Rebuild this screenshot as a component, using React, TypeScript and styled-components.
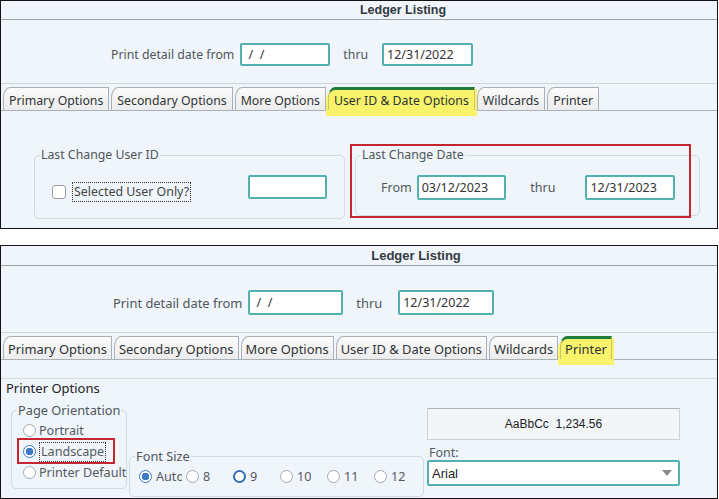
import * as React from 'react';
import styled, { createGlobalStyle } from 'styled-components';

const GlobalStyle = createGlobalStyle`
  html, body {
    margin: 0;
    padding: 0;
    background: #ffffff;
    font-family: "Noto Sans", "Open Sans", sans-serif;
  }
`;

type Metrics = {
  font: number;
  titleFont: number;
  titleShift: number;
  titleH: number;
  rowTop: number;
  rowLeft: number;
  fromW: number;
  thruW: number;
  inputH: number;
  thruL: number;
  thruR: number;
  tabPad: number;
};

const TOP: Metrics = {
  font: 12.3,
  titleFont: 12.5,
  titleShift: 88,
  titleH: 18,
  rowTop: 23,
  rowLeft: 110,
  fromW: 90,
  thruW: 91,
  inputH: 23,
  thruL: 13,
  thruR: 14,
  tabPad: 5,
};

const BOTTOM: Metrics = {
  font: 12.9,
  titleFont: 13,
  titleShift: 114,
  titleH: 19,
  rowTop: 24,
  rowLeft: 112,
  fromW: 95,
  thruW: 96,
  inputH: 25,
  thruL: 13,
  thruR: 16,
  tabPad: 4,
};

const Page = styled.div`
  width: 719px;
  height: 499px;
  display: flex;
  flex-direction: column;
  gap: 16px;
  overflow: hidden;
`;

const Panel = styled.div<{ $h: number }>`
  position: relative;
  width: 718px;
  height: ${p => p.$h}px;
  box-sizing: border-box;
  border: 1px solid #141414;
  background: #eff5fb;
  color: #444;
`;

const TitleBar = styled.div<{ $m: Metrics }>`
  height: ${p => p.$m.titleH}px;
  border-bottom: 1px solid #9aa3ab;
  padding-left: ${p => p.$m.titleShift}px;
  display: flex;
  align-items: center;
  justify-content: center;
  font-family: "Liberation Sans", Arial, sans-serif;
  font-weight: bold;
  font-size: ${p => p.$m.titleFont}px;
  color: #333a40;
`;

const DateRow = styled.div<{ $m: Metrics }>`
  display: flex;
  align-items: center;
  margin-top: ${p => p.$m.rowTop}px;
  padding-left: ${p => p.$m.rowLeft}px;
  font-size: ${p => p.$m.font}px;
  color: #505559;
`;

const TextBox = styled.div<{ $w: number; $h: number }>`
  width: ${p => p.$w}px;
  height: ${p => p.$h}px;
  box-sizing: border-box;
  border: 2px solid #52b1b0;
  border-radius: 2px;
  background: #ffffff;
  padding: 0 3px;
  display: flex;
  align-items: center;
  font-size: 12.5px;
  color: #333;
  white-space: pre;
`;

const Thru = styled.span<{ $l: number; $r: number }>`
  margin: 0 ${p => p.$r}px 0 ${p => p.$l}px;
`;

const TabStrip = styled.div`
  display: flex;
  align-items: flex-end;
  gap: 2px;
  margin-top: 17px;
  padding: 3px 0 0 2px;
  border-top: 1px solid #cfd5da;
  border-bottom: 1px solid #a9b0b6;
`;

const Tab = styled.div<{ $active?: boolean; $font: number; $pad: number }>`
  position: relative;
  height: 23px;
  box-sizing: border-box;
  padding: 2px ${p => p.$pad}px 0;
  display: flex;
  align-items: center;
  font-size: ${p => p.$font}px;
  color: #2f3336;
  white-space: nowrap;
  border: 1px solid #aab0b5;
  border-bottom: none;
  border-top-left-radius: 7px 11px;
  background: linear-gradient(#fbfbfb, #ececec);
  ${p =>
    p.$active &&
    `
    padding-top: 0;
    border-color: #c9c56a;
    border-top: 3px solid #1f7a3c;
    background: #f8f36a;
    box-shadow: 0 4px 0 2px #f8f36a;
    z-index: 1;
  `}
`;

const Content = styled.div<{ $pad: number; $top: number }>`
  padding-left: ${p => p.$pad}px;
  margin-top: ${p => p.$top}px;
`;

const GroupRow = styled.div`
  display: flex;
  align-items: flex-start;
`;

const Group = styled.fieldset<{ $w: number; $ml?: number; $mt?: number }>`
  margin: ${p => p.$mt ?? 0}px 0 0 ${p => p.$ml ?? 0}px;
  width: ${p => p.$w}px;
  box-sizing: border-box;
  border: 1px solid #d3dae0;
  border-radius: 5px;
  padding: 0 0 0 5px;
  min-width: 0;
`;

const Legend = styled.legend<{ $font: number }>`
  padding: 0 1px;
  font-size: ${p => p.$font}px;
  line-height: 16px;
  color: #505559;
  white-space: nowrap;
`;

const GroupBody = styled.div<{ $pad: string }>`
  padding: ${p => p.$pad};
`;

const SpreadRow = styled.div`
  display: flex;
  align-items: center;
  justify-content: space-between;
`;

const CheckLabel = styled.label`
  display: flex;
  align-items: center;
  gap: 6px;
  margin-top: 10px;
  font-size: 12.4px;
  color: #444;
`;

const CheckBox = styled.span`
  width: 14px;
  height: 14px;
  box-sizing: border-box;
  border: 1px solid #9aa0a6;
  border-radius: 3px;
  background: #fff;
`;

const FocusText = styled.span`
  border: 1px dotted #333;
  padding: 0 1px;
  line-height: 18px;
`;

const DateFields = styled.div`
  display: flex;
  align-items: center;
  font-size: 12.5px;
  color: #505559;
`;

const RedMark = styled.div<{ $x: number; $y: number; $w: number; $h: number }>`
  position: absolute;
  left: ${p => p.$x}px;
  top: ${p => p.$y}px;
  width: ${p => p.$w}px;
  height: ${p => p.$h}px;
  box-sizing: border-box;
  border: 2px solid #c3262e;
  pointer-events: none;
`;

const TabPage = styled.div`
  margin-top: 18px;
  border-top: 1px solid #d5dbe0;
  padding-left: 5px;
`;

const SectionLabel = styled.div`
  font-size: 13px;
  line-height: 18px;
  color: #222;
`;

const OptionsRow = styled.div`
  display: flex;
  align-items: flex-start;
  margin-top: 5px;
`;

const RadioRow = styled.div`
  display: flex;
  align-items: center;
  gap: 3px;
  height: 21px;
  font-size: 12.6px;
  color: #555a5e;
  white-space: nowrap;
`;

const Radio = styled.span<{ $checked?: boolean; $focus?: boolean }>`
  flex: none;
  width: 13px;
  height: 13px;
  box-sizing: border-box;
  border-radius: 50%;
  border: ${p => (p.$focus ? '2px solid #2f6db8' : p.$checked ? '1px solid #3b79c4' : '1px solid #a3a9ae')};
  background: ${p => (p.$checked ? 'radial-gradient(circle, #3b79c4 0 3.5px, #fff 4px)' : '#fff')};
`;

const SizeRow = styled.div`
  display: flex;
  align-items: center;
`;

const SizeCell = styled.div`
  width: 47px;
  display: flex;
  align-items: center;
  gap: 4px;
  height: 20px;
  font-size: 12.6px;
  color: #555a5e;
`;

const SizeText = styled.span`
  max-width: 26px;
  overflow: hidden;
  white-space: nowrap;
`;

const RightColumn = styled.div`
  margin: 6px 0 0 3px;
  width: 253px;
  display: flex;
  flex-direction: column;
`;

const Preview = styled.div`
  height: 32px;
  box-sizing: border-box;
  border: 1px solid #cdd2d7;
  border-top-color: #aeb3b8;
  background: #f3f6f9;
  display: flex;
  align-items: center;
  justify-content: center;
  font-family: "Liberation Sans", Arial, sans-serif;
  font-size: 12px;
  color: #222;
  white-space: pre;
`;

const FieldLabel = styled.div`
  margin-top: 5px;
  padding-left: 2px;
  line-height: 15px;
  font-size: 12.5px;
  color: #555a5e;
`;

const Select = styled.div`
  height: 26px;
  box-sizing: border-box;
  border: 2px solid #52b1b0;
  border-radius: 2px;
  background: #fff;
  display: flex;
  align-items: center;
  justify-content: space-between;
  padding: 0 6px 0 3px;
  font-family: "Liberation Sans", Arial, sans-serif;
  font-size: 13px;
  color: #222;
`;

const Caret = styled.span`
  width: 0;
  height: 0;
  border-left: 5px solid transparent;
  border-right: 5px solid transparent;
  border-top: 6px solid #8a8a8a;
`;

const TABS = ['Primary Options', 'Secondary Options', 'More Options', 'User ID & Date Options', 'Wildcards', 'Printer'];

const Header = ({ m, active }: { m: Metrics; active: number }) => (
  <>
    <TitleBar $m={m}>Ledger Listing</TitleBar>
    <DateRow $m={m}>
      <span style={{ marginRight: 6 }}>Print detail date from</span>
      <TextBox $w={m.fromW} $h={m.inputH}>{' /  /'}</TextBox>
      <Thru $l={m.thruL} $r={m.thruR}>thru</Thru>
      <TextBox $w={m.thruW} $h={m.inputH}>12/31/2022</TextBox>
    </DateRow>
    <TabStrip>
      {TABS.map((t, i) => (
        <Tab key={t} $active={i === active} $font={m.font} $pad={m.tabPad}>
          {t}
        </Tab>
      ))}
    </TabStrip>
  </>
);

const SIZES = [
  { label: 'Auto', checked: true },
  { label: '8' },
  { label: '9', focus: true },
  { label: '10' },
  { label: '11' },
  { label: '12' },
];

export default function App() {
  return (
    <Page>
      <GlobalStyle />
      <Panel $h={229}>
        <Header m={TOP} active={3} />
        <Content $pad={33} $top={36}>
          <GroupRow>
            <Group $w={311}>
              <Legend $font={12.3}>Last Change User ID</Legend>
              <GroupBody $pad="9px 17px 16px 12px">
                <SpreadRow>
                  <CheckLabel>
                    <CheckBox />
                    <FocusText>Selected User Only?</FocusText>
                  </CheckLabel>
                  <TextBox $w={79} $h={24} />
                </SpreadRow>
              </GroupBody>
            </Group>
            <Group $w={345} $ml={10}>
              <Legend $font={12.3}>Last Change Date</Legend>
              <GroupBody $pad="12px 24px 15px 20px">
                <DateFields>
                  <span style={{ marginRight: 5 }}>From</span>
                  <TextBox $w={91} $h={25}>03/12/2023</TextBox>
                  <Thru $l={24} $r={30}>thru</Thru>
                  <TextBox $w={91} $h={25}>12/31/2023</TextBox>
                </DateFields>
              </GroupBody>
            </Group>
          </GroupRow>
        </Content>
        <RedMark $x={349} $y={143} $w={341} $h={74} />
      </Panel>

      <Panel $h={254}>
        <Header m={BOTTOM} active={5} />
        <TabPage>
          <SectionLabel>Printer Options</SectionLabel>
          <OptionsRow>
            <Group $w={116} $ml={5}>
              <Legend $font={12.8}>Page Orientation</Legend>
              <GroupBody $pad="2px 0 5px 6px">
                <RadioRow>
                  <Radio />
                  <span>Portrait</span>
                </RadioRow>
                <RadioRow>
                  <Radio $checked />
                  <FocusText>Landscape</FocusText>
                </RadioRow>
                <RadioRow>
                  <Radio />
                  <span>Printer Default</span>
                </RadioRow>
              </GroupBody>
            </Group>
            <Group $w={295} $ml={2} $mt={46}>
              <Legend $font={12.8}>Font Size</Legend>
              <GroupBody $pad="2px 0 10px 4px">
                <SizeRow>
                  {SIZES.map(s => (
                    <SizeCell key={s.label}>
                      <Radio $checked={s.checked} $focus={s.focus} />
                      <SizeText>{s.label}</SizeText>
                    </SizeCell>
                  ))}
                </SizeRow>
              </GroupBody>
            </Group>
            <RightColumn>
              <Preview>{'AaBbCc  1,234.56'}</Preview>
              <FieldLabel>Font:</FieldLabel>
              <Select>
                <span>Arial</span>
                <Caret />
              </Select>
            </RightColumn>
          </OptionsRow>
        </TabPage>
        <RedMark $x={16} $y={192} $w={98} $h={26} />
      </Panel>
    </Page>
  );
}
